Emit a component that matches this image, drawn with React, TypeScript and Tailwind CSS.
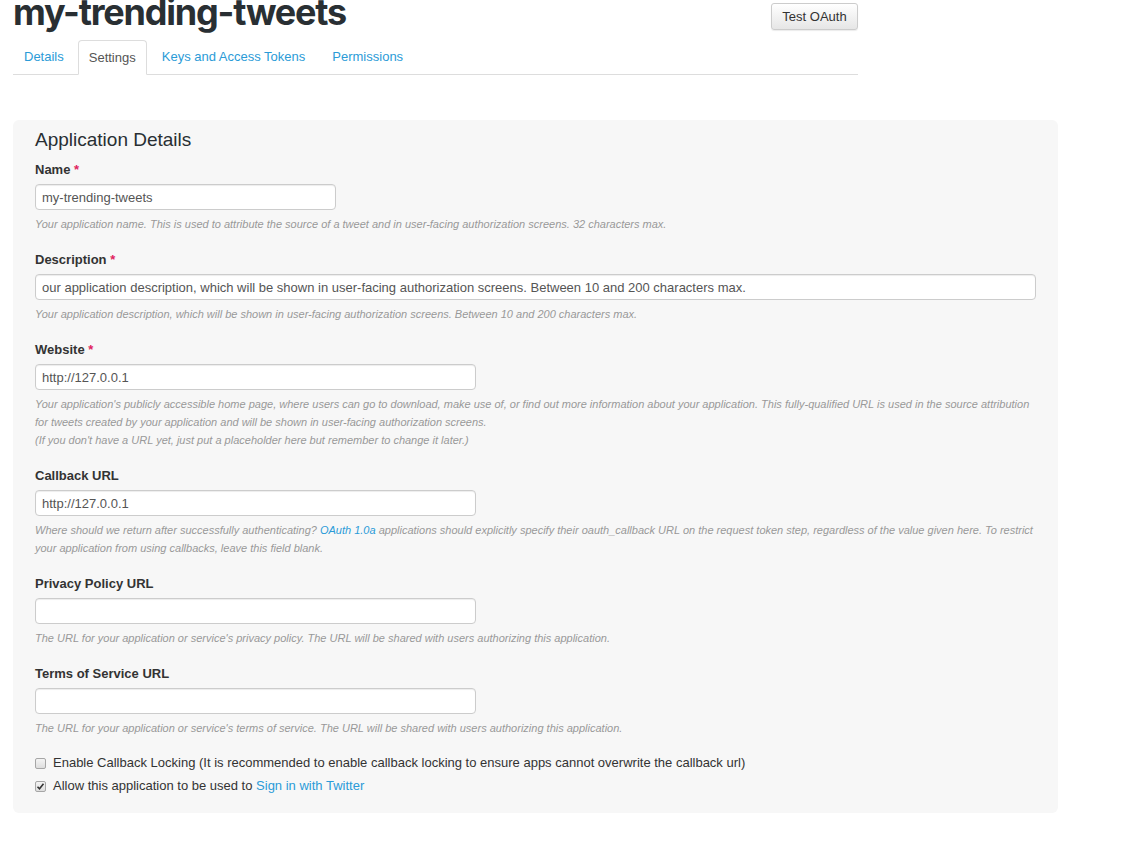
import React from "react";

const help = "text-[11px] leading-[18px] italic text-[#999999] mt-[5px]";
const label = "h-[18px] leading-[20px] text-[13px] font-bold text-[#333333] mb-[6px]";
const inputCls =
  "h-[26px] border border-[#cccccc] rounded-[4px] bg-white px-[6px] text-[13px] text-[#555555] outline-none shadow-[inset_0_1px_1px_rgba(0,0,0,0.075)]";

function Req() {
  return <span className="text-[#e0245e]"> *</span>;
}

function Field({
  name,
  req,
  value,
  width,
  children,
}: {
  name: string;
  req?: boolean;
  value: string;
  width: string;
  children: React.ReactNode;
}) {
  return (
    <div className="mb-[17px]">
      <div className={label}>
        {name}
        {req && <Req />}
      </div>
      <input readOnly value={value} className={`${inputCls} ${width} block`} />
      <div className={help}>{children}</div>
    </div>
  );
}

function Check({ checked }: { checked?: boolean }) {
  return (
    <span className="inline-flex w-[11px] h-[11px] border border-[#a6a6a6] rounded-[2px] bg-gradient-to-b from-[#f4f4f4] to-[#dedede] items-center justify-center mr-[7px] shrink-0">
      {checked && (
        <svg width="9" height="9" viewBox="0 0 9 9">
          <path d="M1.5 4.8 L3.5 6.8 L7.5 1.8" fill="none" stroke="#333" strokeWidth="1.6" />
        </svg>
      )}
    </span>
  );
}

export default function App() {
  return (
    <div
      className="min-h-[849px] bg-white pl-[13px]"
      style={{ fontFamily: '"Liberation Sans", Arial, sans-serif' }}
    >
      <div className="w-[845px]">
        <div className="flex justify-between items-start h-[40px]">
          <h1
            className="text-[36px] leading-[36px] font-bold text-[#292f33] mt-[-6px] tracking-[-1.2px]"
            style={{ fontFamily: 'Inter, "Noto Sans", sans-serif' }}
          >
            my-trending-tweets
          </h1>
          <button className="mt-[3px] w-[87px] h-[27px] border border-[#cccccc] rounded-[3px] bg-gradient-to-b from-white to-[#e6e6e6] text-[13px] text-[#333333] shadow-[0_1px_1px_rgba(0,0,0,0.08)]">
            Test OAuth
          </button>
        </div>
        <div className="flex border-b border-[#dddddd] h-[35px] text-[13px]">
          <div className="px-[11px] mr-[3px] h-[34px] leading-[34px] text-[#2b9bd7]">Details</div>
          <div className="px-[10px] mr-[3px] h-[35px] leading-[34px] text-[#555555] bg-white border border-[#dddddd] border-b-white rounded-t-[4px]">
            Settings
          </div>
          <div className="px-[12px] mr-[4px] h-[34px] leading-[34px] text-[#2b9bd7]">Keys and Access Tokens</div>
          <div className="px-[11px] mr-[3px] h-[34px] leading-[34px] text-[#2b9bd7]">Permissions</div>
        </div>
      </div>

      <div className="mt-[45px] w-[1045px] bg-[#f7f7f7] rounded-[6px] px-[22px] pt-[8px] pb-[18px]">
        <h2 className="text-[19px] h-[22px] leading-[24px] text-[#292f33] mb-[10px]">Application Details</h2>

        <Field name="Name" req value="my-trending-tweets" width="w-[301px]">
          Your application name. This is used to attribute the source of a tweet and in user-facing authorization screens. 32 characters max.
        </Field>

        <Field
          name="Description"
          req
          value="our application description, which will be shown in user-facing authorization screens. Between 10 and 200 characters max."
          width="w-[1001px]"
        >
          Your application description, which will be shown in user-facing authorization screens. Between 10 and 200 characters max.
        </Field>

        <Field name="Website" req value="http://127.0.0.1" width="w-[441px]">
          Your application's publicly accessible home page, where users can go to download, make use of, or find out more information about your application. This fully-qualified URL is used in the source attribution for tweets created by your application and will be shown in user-facing authorization screens.
          <br />
          (If you don't have a URL yet, just put a placeholder here but remember to change it later.)
        </Field>

        <Field name="Callback URL" value="http://127.0.0.1" width="w-[441px]">
          Where should we return after successfully authenticating? <span className="text-[#2b9bd7]">OAuth 1.0a</span> applications should explicitly specify their oauth_callback URL on the request token step, regardless of the value given here. To restrict your application from using callbacks, leave this field blank.
        </Field>

        <Field name="Privacy Policy URL" value="" width="w-[441px]">
          The URL for your application or service's privacy policy. The URL will be shared with users authorizing this application.
        </Field>

        <Field name="Terms of Service URL" value="" width="w-[441px]">
          The URL for your application or service's terms of service. The URL will be shared with users authorizing this application.
        </Field>

        <div className="flex items-center h-[18px] mt-[2px] text-[13px] text-[#333333] leading-[18px]">
          <Check />
          Enable Callback Locking (It is recommended to enable callback locking to ensure apps cannot overwrite the callback url)
        </div>
        <div className="flex items-center h-[18px] mt-[5px] text-[13px] text-[#333333] leading-[18px]">
          <Check checked />
          Allow this application to be used to&nbsp;<span className="text-[#2b9bd7]">Sign in with Twitter</span>
        </div>
      </div>
    </div>
  );
}
